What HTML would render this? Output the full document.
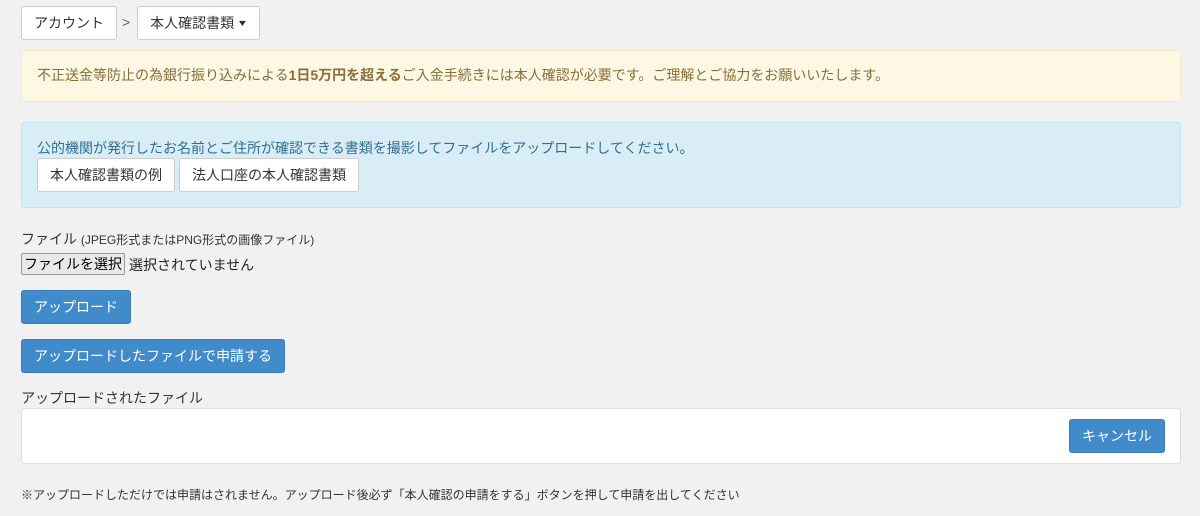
<!DOCTYPE html><html><head><meta charset="utf-8"><style>
body{margin:0;width:1200px;height:516px;background:#f1f1f1;font-family:"Liberation Sans","Noto Sans CJK JP",sans-serif;font-size:14px;color:#333;position:relative;overflow:hidden}
.a{position:absolute;box-sizing:border-box}
.btn{background:#fff;border:1px solid #ccc;border-radius:3px;display:flex;align-items:center;justify-content:center;font-size:14px;color:#333}
.bp{background:#428bca;border:1px solid #3b7dba;border-radius:3px;color:#fff;display:flex;align-items:center;justify-content:center;font-size:14px}
</style></head><body>
<div class="a btn" style="left:21px;top:6px;width:96px;height:34px">アカウント</div>
<div class="a" style="left:122px;top:14px;color:#666">&gt;</div>
<div class="a btn" style="left:137px;top:6px;width:123px;height:34px">本人確認書類&nbsp;<span style="font-size:9px;transform:scaleX(1.3)">▼</span></div>
<div class="a" style="left:21px;top:50px;width:1160px;height:52px;background:#fcf8e3;border:1px solid #faebcc;border-radius:3px;color:#8a6d3b;font-size:14px;padding:14px 15px">不正送金等防止の為銀行振り込みによる<b>1日5万円を超える</b>ご入金手続きには本人確認が必要です。ご理解とご協力をお願いいたします。</div>
<div class="a" style="left:21px;top:122px;width:1160px;height:86px;background:#d9edf7;border:1px solid #bce8f1;border-radius:3px;color:#31708f;font-size:14px;padding:15px 15px">公的機関が発行したお名前とご住所が確認できる書類を撮影してファイルをアップロードしてください。</div>
<div class="a btn" style="left:37px;top:158px;width:138px;height:34px">本人確認書類の例</div>
<div class="a btn" style="left:179px;top:158px;width:180px;height:34px">法人口座の本人確認書類</div>
<div class="a" style="left:21px;top:229px;font-size:14px">ファイル <span style="font-size:12px">(JPEG形式またはPNG形式の画像ファイル)</span></div>
<div class="a" style="left:21px;top:253px;width:104px;height:22px;background:#e9e9e9;border:1px solid #999;border-radius:2px;font-size:14px;display:flex;align-items:center;justify-content:center;color:#000">ファイルを選択</div>
<div class="a" style="left:129px;top:255px;color:#222">選択されていません</div>
<div class="a bp" style="left:21px;top:290px;width:110px;height:34px">アップロード</div>
<div class="a bp" style="left:21px;top:339px;width:264px;height:34px">アップロードしたファイルで申請する</div>
<div class="a" style="left:21px;top:388px">アップロードされたファイル</div>
<div class="a" style="left:21px;top:408px;width:1160px;height:56px;background:#fff;border:1px solid #ddd;border-radius:3px"></div>
<div class="a bp" style="left:1069px;top:419px;width:96px;height:34px">キャンセル</div>
<div class="a" style="left:21px;top:486px;font-size:12px">※アップロードしただけでは申請はされません。アップロード後必ず「本人確認の申請をする」ボタンを押して申請を出してください</div>
</body></html>
